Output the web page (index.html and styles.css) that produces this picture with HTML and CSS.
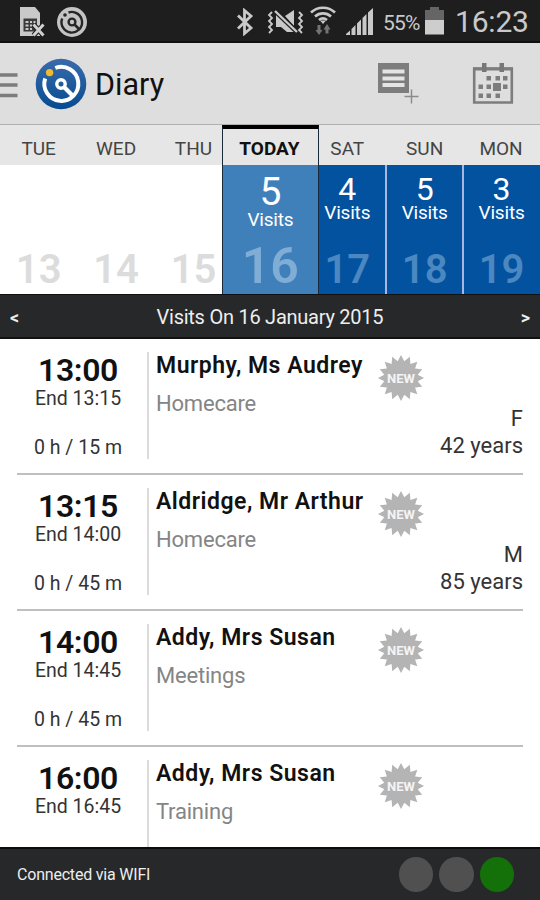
FILE: index.html
```
<!DOCTYPE html>
<html lang="en">
<head>
  <meta charset="UTF-8">
  <meta name="viewport" content="width=device-width, initial-scale=1.0">
  <title>Diary</title>
  <link rel="stylesheet" href="styles.css">
</head>
<body>
  <!-- Shared shapes -->
  <svg class="defs" width="0" height="0">
    <defs>
      <polygon id="burst" fill="#b4b4b4" points="0,-23 3.3,-16.7 8.8,-21.2 9.4,-14.1 16.3,-16.3 14.1,-9.4 21.2,-8.8 16.7,-3.3 23,0 16.7,3.3 21.2,8.8 14.1,9.4 16.3,16.3 9.4,14.1 8.8,21.2 3.3,16.7 0,23 -3.3,16.7 -8.8,21.2 -9.4,14.1 -16.3,16.3 -14.1,9.4 -21.2,8.8 -16.7,3.3 -23,0 -16.7,-3.3 -21.2,-8.8 -14.1,-9.4 -16.3,-16.3 -9.4,-14.1 -8.8,-21.2 -3.3,-16.7"/>
    </defs>
  </svg>

  <!-- Status bar -->
  <div class="status-bar">
    <svg class="icon-sim" width="26" height="32" viewBox="0 0 26 32">
      <path d="M1 1h15l5 6v23H1z" fill="#c9c9c9"/>
      <path d="M4.500 12.500h13.500v13H4.500z" fill="#3a3a3a"/>
      <path d="M6.500 15h3v2h-3zM11 15h2v2h-2zM14.500 15h2v2h-2zM6.500 18.500h3v2h-3zM11 18.500h2v2h-2zM6.500 22h3v2h-3zM11 22h2v2h-2z" fill="#c9c9c9"/>
      <path d="M14.500 18.500l10 11M24.500 18.500l-10 11" stroke="#1e1e1e" stroke-width="5"/>
      <path d="M14.500 18.500l10 11M24.500 18.500l-10 11" stroke="#d0d0d0" stroke-width="3"/>
    </svg>
    <svg class="icon-app" width="32" height="32" viewBox="0 0 32 32" fill="none">
      <circle cx="16" cy="16" r="15" fill="#c4c4c4"/>
      <path d="M12.500 6.500A10.300 10.300 0 1 1 6.200 12.500" stroke="#262626" stroke-width="2.400"/>
      <circle cx="9" cy="9" r="1.800" fill="#262626"/>
      <circle cx="16" cy="16" r="3.400" stroke="#262626" stroke-width="2.400"/>
      <path d="M18.500 18.500l4.500 4.500" stroke="#262626" stroke-width="2.600"/>
    </svg>
    <div class="status-right">
      <svg width="18" height="28" viewBox="0 0 18 28" fill="none" stroke="#c9c9c9" stroke-width="2.800">
        <path d="M2 7.500l13 12.500-6.500 5.500V2.500L15 8 2 20.500"/>
      </svg>
      <svg class="icon-mute" width="38" height="28" viewBox="0 0 38 28" fill="none">
        <path d="M9 6l19 18H20l-6-5H9z" fill="#c9c9c9"/>
        <path d="M18 8l9-6v16z" fill="#c9c9c9"/>
        <path d="M8 3l22 21" stroke="#1e1e1e" stroke-width="4.500"/>
        <path d="M8 3l22 21" stroke="#c9c9c9" stroke-width="2.400"/>
        <path d="M5 4L2 7l3 3-3 3 3 3-3 3 3 3-3 3M32 4l3 3-3 3 3 3-3 3 3 3-3 3 3 3" stroke="#c9c9c9" stroke-width="1.800"/>
      </svg>
      <svg class="icon-wifi" width="28" height="32" viewBox="0 0 28 32" fill="none">
        <path d="M2 8.500a17.500 17.500 0 0 1 24 0M6 12.500a12 12 0 0 1 16 0M10 16a6.500 6.500 0 0 1 8 0" stroke="#c9c9c9" stroke-width="2.700"/>
        <path d="M11 16.500h6L14 20z" fill="#c9c9c9"/>
        <path d="M8.500 21h3v5h2L10 31l-3.500-5h2zM16.500 29.500v-4h-2L18 20l3.500 5.500h-2v4z" fill="#737373"/>
      </svg>
      <svg class="icon-signal" width="29" height="28" viewBox="0 0 29 28" fill="#c9c9c9">
        <path d="M1 27v-1l4-3.500V27zM6.500 27v-6l4-4v10zM12 27V15.500l4-4V27zM17.500 27V10l4-4v21zM23 27V4.500L28 0v27z"/>
      </svg>
      <span class="battery-text">55%</span>
      <svg class="icon-battery" width="21" height="28" viewBox="0 0 21 28">
        <path d="M6 0h9v3h5v10H1V3h5z" fill="#656565"/>
        <path d="M1 13h19v14.500H1z" fill="#cdcdcd"/>
      </svg>
      <span class="clock">16:23</span>
    </div>
  </div>

  <!-- Action bar -->
  <div class="action-bar">
    <svg class="icon-menu" width="18" height="28" viewBox="0 0 18 28">
      <path d="M0 4h17.500M0 14h17.500M0 24.500h17.500" stroke="#7c7c7c" stroke-width="3.400"/>
    </svg>
    <svg class="logo" width="52" height="52" viewBox="0 0 52 52" fill="none">
      <defs>
        <linearGradient id="logoBg" x1="0" y1="0" x2="0" y2="1">
          <stop offset="0" stop-color="#3a6bab"/>
          <stop offset="1" stop-color="#064c8f"/>
        </linearGradient>
      </defs>
      <circle cx="26" cy="26" r="25.300" fill="url(#logoBg)"/>
      <path d="M20.300 10A17 17 0 1 1 10.200 20.500" stroke="#fff" stroke-width="4"/>
      <circle cx="14.600" cy="14.600" r="3.700" fill="#f4b92a"/>
      <circle cx="26" cy="26" r="4.200" stroke="#fff" stroke-width="3.400"/>
      <path d="M29 29l9 9" stroke="#fff" stroke-width="4.200"/>
    </svg>
    <h1 class="title">Diary</h1>
    <svg class="icon-add" width="41" height="42" viewBox="0 0 41 42">
      <path d="M0 0h31v30H0z" fill="#7d7d7d"/>
      <path d="M4.500 6.500h22v4h-22zM4.500 13.500h22v4h-22zM4.500 20h22v4h-22z" fill="#e4e4e4"/>
      <path d="M33.500 26.500v14M26.500 33.500h14" stroke="#8a8a8a" stroke-width="1.400"/>
    </svg>
    <svg class="icon-calendar" width="42" height="42" viewBox="0 0 42 42">
      <path d="M2.200 5.500h37.600v34H2.200z" fill="none" stroke="#7d7d7d" stroke-width="2.600"/>
      <path d="M1 4.500h40v3H1z" fill="#7d7d7d"/>
      <path d="M10 0h4.500v9H10zM27.500 0H32v9h-4.500z" fill="#777"/>
      <path d="M14.500 13h4.500v4.500h-4.500zM23.500 13H28v4.500h-4.500zM31 13h4.500v4.500H31zM6.500 21.500H11V26H6.500zM14.500 21.500h4.500V26h-4.500zM31 21.500h4.500V26H31zM6.500 30.500H11V35H6.500zM14.500 30.500h4.500V35h-4.500zM23.500 30.500H28V35h-4.500zM21 20h8v8h-8z" fill="#7d7d7d"/>
    </svg>
  </div>

  <!-- Week strip -->
  <div class="week">
    <div class="day empty">
      <div class="day-name">TUE</div>
      <div class="day-body"><span class="date">13</span></div>
    </div>
    <div class="day empty">
      <div class="day-name">WED</div>
      <div class="day-body"><span class="date">14</span></div>
    </div>
    <div class="day empty">
      <div class="day-name">THU</div>
      <div class="day-body"><span class="date">15</span></div>
    </div>
    <div class="day today">
      <div class="day-name">TODAY</div>
      <div class="day-body">
        <span class="count">5</span>
        <span class="visits">Visits</span>
        <span class="date">16</span>
      </div>
    </div>
    <div class="day">
      <div class="day-name">SAT</div>
      <div class="day-body">
        <span class="count">4</span>
        <span class="visits">Visits</span>
        <span class="date">17</span>
      </div>
    </div>
    <div class="day">
      <div class="day-name">SUN</div>
      <div class="day-body">
        <span class="count">5</span>
        <span class="visits">Visits</span>
        <span class="date">18</span>
      </div>
    </div>
    <div class="day">
      <div class="day-name">MON</div>
      <div class="day-body">
        <span class="count">3</span>
        <span class="visits">Visits</span>
        <span class="date">19</span>
      </div>
    </div>
  </div>

  <div class="date-bar">
    <span class="arrow">&lt;</span>
    <span class="date-title">Visits On 16 January 2015</span>
    <span class="arrow">&gt;</span>
  </div>

  <!-- Visits -->
  <div class="visit-list">
    <div class="visit">
      <div class="visit-time">
        <div class="start">13:00</div>
        <div class="end">End 13:15</div>
        <div class="duration">0 h / 15 m</div>
      </div>
      <div class="visit-info">
        <div class="name">Murphy, Ms Audrey</div>
        <div class="type">Homecare</div>
      </div>
      <svg class="badge" width="48" height="48" viewBox="-24 -24 48 48">
        <use href="#burst"/>
        <text class="badge-text" x="0" y="5" text-anchor="middle">NEW</text>
      </svg>
      <div class="person">F<br>42 years</div>
    </div>
    <div class="visit">
      <div class="visit-time">
        <div class="start">13:15</div>
        <div class="end">End 14:00</div>
        <div class="duration">0 h / 45 m</div>
      </div>
      <div class="visit-info">
        <div class="name">Aldridge, Mr Arthur</div>
        <div class="type">Homecare</div>
      </div>
      <svg class="badge" width="48" height="48" viewBox="-24 -24 48 48">
        <use href="#burst"/>
        <text class="badge-text" x="0" y="5" text-anchor="middle">NEW</text>
      </svg>
      <div class="person">M<br>85 years</div>
    </div>
    <div class="visit">
      <div class="visit-time">
        <div class="start">14:00</div>
        <div class="end">End 14:45</div>
        <div class="duration">0 h / 45 m</div>
      </div>
      <div class="visit-info">
        <div class="name">Addy, Mrs Susan</div>
        <div class="type">Meetings</div>
      </div>
      <svg class="badge" width="48" height="48" viewBox="-24 -24 48 48">
        <use href="#burst"/>
        <text class="badge-text" x="0" y="5" text-anchor="middle">NEW</text>
      </svg>
    </div>
    <div class="visit">
      <div class="visit-time">
        <div class="start">16:00</div>
        <div class="end">End 16:45</div>
      </div>
      <div class="visit-info">
        <div class="name">Addy, Mrs Susan</div>
        <div class="type">Training</div>
      </div>
      <svg class="badge" width="48" height="48" viewBox="-24 -24 48 48">
        <use href="#burst"/>
        <text class="badge-text" x="0" y="5" text-anchor="middle">NEW</text>
      </svg>
    </div>
  </div>

  <!-- Connection footer -->
  <div class="footer">
    <span class="connection">Connected via WIFI</span>
    <div class="lights">
      <span class="light"></span>
      <span class="light"></span>
      <span class="light on"></span>
    </div>
  </div>
</body>
</html>
```
FILE: styles.css
```
* {
  margin: 0;
  padding: 0;
  box-sizing: border-box;
}

body {
  font-family: Roboto, "Liberation Sans", sans-serif;
  background: #fff;
  color: #111;
  width: 540px;
  height: 900px;
  display: flex;
  flex-direction: column;
  overflow: hidden;
}

svg {
  display: block;
  flex: none;
}

.defs {
  position: absolute;
}

/* Status bar */
.status-bar {
  height: 43px;
  flex: none;
  background: #1e1e1e;
  border-bottom: 2px solid #101010;
  display: flex;
  align-items: center;
  padding: 2px 11px 0 19px;
  color: #c9c9c9;
}

.icon-app {
  margin-left: 11px;
}

.status-right {
  margin-left: auto;
  display: flex;
  align-items: center;
}

.icon-mute {
  margin-left: 13px;
}

.icon-wifi {
  margin: -4px 0 0 4px;
}

.icon-signal {
  margin-left: 8px;
}

.battery-text {
  font-size: 21px;
  width: 38px;
  margin: 2px 0 0 9px;
  letter-spacing: -0.8px;
}

.icon-battery {
  margin: -2px 0 0 3px;
}

.clock {
  font-size: 30px;
  line-height: 36px;
  width: 74px;
  margin-left: 10px;
  letter-spacing: -0.2px;
}

/* Action bar */
.action-bar {
  height: 82px;
  flex: none;
  background: #dedede;
  border-bottom: 1px solid #b0b0b0;
  display: flex;
  align-items: center;
  padding-right: 26px;
}

.icon-menu {
  margin-top: 2px;
}

.logo {
  margin-left: 17px;
}

.title {
  font-size: 30.5px;
  font-weight: 400;
  line-height: 36px;
  margin: 2px 0 0 8px;
  flex: 1;
}

.icon-calendar {
  margin-left: 53px;
}

/* Week strip */
.week {
  height: 169px;
  flex: none;
  display: grid;
  grid-template-columns: repeat(7, 77.4px);
}

.day {
  display: flex;
  flex-direction: column;
}

.day-name {
  height: 40px;
  background: #e6e6e6;
  color: #444;
  font-size: 19px;
  line-height: 48px;
  text-align: center;
  padding-right: 2px;
}

.empty .day-name {
  padding-right: 0;
}

.day-body {
  flex: 1;
  background: #03529f;
  border-right: 2px solid #a9b7e0;
  color: #fff;
  display: flex;
  flex-direction: column;
  align-items: center;
  padding-top: 9px;
}

.day:last-child .day-name {
  padding-right: 4px;
}

.day:last-child .day-body {
  border-right: none;
  padding-right: 3px;
}

.empty .day-body {
  background: #fff;
  border-right: none;
}

.count {
  font-size: 32px;
  line-height: 30px;
}

.visits {
  font-size: 19px;
  line-height: 18px;
  letter-spacing: -0.2px;
}

.date {
  font-size: 40px;
  font-weight: 600;
  line-height: 44px;
  margin-top: auto;
  margin-bottom: 2px;
  color: #4b87c0;
}

.empty .date {
  color: #dcdcdc;
}

.today {
  margin: 0 -9px 0 -10px;
  border: 1px solid #1b2a3a;
  border-top: 4px solid #000;
  border-bottom: none;
  position: relative;
}

.today .day-name {
  height: 36px;
  line-height: 40px;
  font-weight: 700;
  color: #111;
}

.today .day-body {
  background: #3f80ba;
  border-right: none;
  padding-top: 8px;
}

.today .count {
  font-size: 39px;
  line-height: 38px;
}

.today .date {
  font-size: 50px;
  line-height: 54px;
  margin-bottom: 1px;
  color: #80add5;
}

/* Selected date */
.date-bar {
  height: 45px;
  flex: none;
  background: #262829;
  border-top: 1px solid #111;
  border-bottom: 2px solid #111;
  color: #eee;
  display: flex;
  align-items: center;
  justify-content: space-between;
  padding: 2px 10px 0;
}

.date-title {
  font-size: 20px;
  letter-spacing: -0.25px;
}

.arrow {
  font-size: 18px;
  font-weight: 600;
}

/* Visits */
.visit-list {
  flex: 1;
  min-height: 0;
  overflow: hidden;
  padding: 0 17px;
}

.visit {
  height: 136px;
  border-bottom: 2px solid #bfbfbf;
  display: grid;
  grid-template-columns: 132px 228px 48px 1fr;
  padding-top: 13px;
}

.visit:last-child {
  border-bottom: none;
}

.visit-time {
  height: 107px;
  border-right: 2px solid #dcdcdc;
  padding-right: 8px;
  text-align: center;
  font-size: 19.5px;
  color: #333;
}

.start {
  font-size: 32px;
  font-weight: 600;
  line-height: 36px;
  letter-spacing: -0.4px;
  color: #111;
}

.end {
  line-height: 22px;
}

.duration {
  line-height: 22px;
  margin-top: 27px;
}

.visit-info {
  padding-left: 7px;
  white-space: nowrap;
}

.name {
  font-size: 23px;
  font-weight: 600;
  line-height: 28px;
  letter-spacing: 0.5px;
}

.type {
  font-size: 22px;
  line-height: 26px;
  margin-top: 11px;
  letter-spacing: -0.2px;
  color: #858585;
}

.badge {
  margin-top: 2px;
}

.badge-text {
  font-size: 13px;
  font-weight: 700;
  fill: #f4f4f4;
}

.person {
  text-align: right;
  font-size: 22px;
  line-height: 27px;
  color: #333;
  padding-top: 53px;
}

/* Connection footer */
.footer {
  height: 53px;
  flex: none;
  background: #262829;
  border-top: 2px solid #0c0c0c;
  display: flex;
  align-items: center;
  justify-content: space-between;
  padding: 0 26px 0 17px;
}

.connection {
  font-size: 16px;
  letter-spacing: -0.2px;
  color: #eee;
}

.lights {
  display: flex;
  gap: 6px;
}

.light {
  width: 34.5px;
  height: 34.5px;
  border-radius: 50%;
  background: #505050;
}

.light.on {
  background: #147008;
}
```
